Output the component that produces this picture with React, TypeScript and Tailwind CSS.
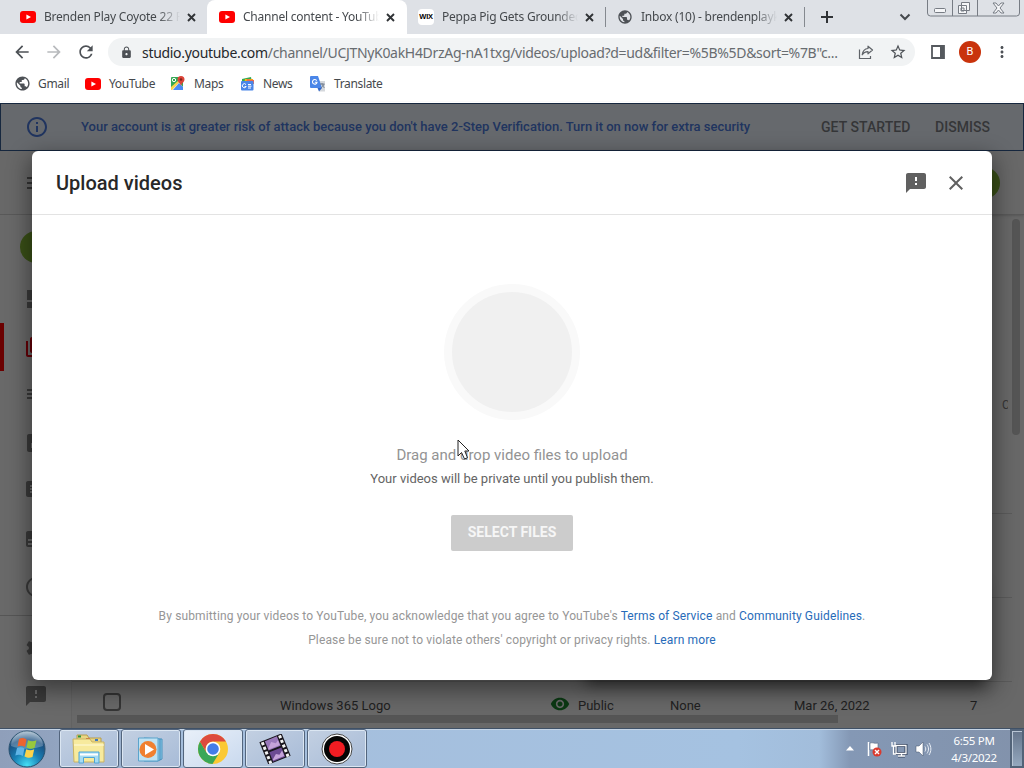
import type { ReactNode } from "react"
import {
  MdArrowBack, MdArrowForward, MdAnalytics, MdClose, MdCopyright, MdDashboard,
  MdFeedback, MdInfoOutline, MdLock, MdMenu, MdMoreVert, MdPlaylistPlay, MdPublic, MdRefresh,
  MdSettings, MdStarBorder, MdSubtitles, MdComment, MdVideoLibrary, MdVisibility,
} from "react-icons/md"

function YouTubeIcon() {
  return (
    <svg width="16" height="12" viewBox="0 0 16 12" className="shrink-0">
      <rect width="16" height="12" rx="3" fill="#f00" />
      <path d="M6.4 3.4v5.2L11 6z" fill="#fff" />
    </svg>
  )
}

function WixIcon() {
  return (
    <span className="flex h-4 w-4 shrink-0 items-center justify-center rounded-sm bg-white font-['Liberation_Sans'] text-[7.5px] font-bold tracking-[-0.3px] text-black">
      WIX
    </span>
  )
}

function MapsIcon() {
  return (
    <svg width="15" height="15" viewBox="0 0 15 15">
      <rect x="1" y="1" width="12" height="13" rx="1" fill="#34a853" />
      <path d="M1 14 9 6l4 5v3z" fill="#e8eaed" />
      <path d="M3 14 9 7l4 4v3z" fill="#4a8af4" />
      <path d="M1 11 9 4l1 1.5-8 8.5H1z" fill="#fbd34d" />
      <circle cx="4" cy="4" r="1.7" fill="none" stroke="#fff" strokeWidth="1" />
      <path d="M11 0a3.5 3.5 0 0 1 3.5 3.5C14.500 6 12 6.500 11 10 10 6.500 7.500 6 7.500 3.500A3.500 3.500 0 0 1 11 0z" fill="#dc4437" />
      <circle cx="11" cy="3.500" r="1.200" fill="#7b231c" />
    </svg>
  )
}

function NewsIcon() {
  return (
    <svg width="15" height="14" viewBox="0 0 15 14">
      <path d="M2 2 11 0l1 5H2z" fill="#34a853" />
      <path d="M5 2h8v5H4z" fill="#fbbc04" />
      <path d="m7 2 7 1v4H6z" fill="#ea6a4c" />
      <rect x="1" y="4" width="12.500" height="9.500" rx="1" fill="#4a86e8" />
      <path d="M6 7.600A2 2 0 1 0 6.200 9.500H4.600M8 7.500h3M8 9.200h3.500M8 11h3" fill="none" stroke="#fff" strokeWidth="1" />
    </svg>
  )
}

function TranslateIcon() {
  return (
    <svg width="16" height="16" viewBox="0 0 16 16">
      <path d="M7 5h8v10.500h-6z" fill="#d5d8dc" />
      <path d="M1 0h7l4 12H1a1 1 0 0 1-1-1V1a1 1 0 0 1 1-1z" fill="#4a86e8" />
      <path d="M7.500 12H12l-3 3.500z" fill="#3367c8" />
      <path d="M6.700 4.600A2.300 2.300 0 1 0 7 6.300H4.800" fill="none" stroke="#fff" strokeWidth="1.100" />
      <path d="M10 8h4.500M12 7v1c.5 2 1.500 3 2.500 4M14 8c-.5 2-1.500 3-3 4" fill="none" stroke="#6e7b8b" strokeWidth=".9" />
    </svg>
  )
}

function ShareIcon() {
  return (
    <svg width="16" height="16" viewBox="0 0 16 16" fill="none" stroke="#5f6368" strokeWidth="1.200">
      <path d="M1.500 5.500v9h11V12" />
      <path d="M10 2.200 14.500 6 10 9.800V7.600C7 7.500 5.500 8.600 4.200 10.800 4.600 7.500 6.500 4.800 10 4.500z" strokeLinejoin="round" />
    </svg>
  )
}

function ChromeIcon() {
  return (
    <svg width="32" height="32" viewBox="0 0 32 32">
      <circle cx="16" cy="16" r="15" fill="#fbc934" />
      <path d="M3 8.500A15 15 0 0 0 15.500 31L22.500 19.500 16 16 9.500 19.500z" fill="#3aa757" />
      <path d="M3 8.500A15 15 0 0 1 29 8.500H16a7.500 7.500 0 0 0-6.500 11z" fill="#dd4b3e" />
      <circle cx="16" cy="16" r="7.300" fill="#fff" />
      <circle cx="16" cy="16" r="5.800" fill="#447de8" />
    </svg>
  )
}

function StartOrb() {
  return (
    <svg width="38" height="38" viewBox="0 0 38 38">
      <defs>
        <radialGradient id="orb" cx=".5" cy=".95" r=".95">
          <stop offset="0" stopColor="#46dff5" />
          <stop offset=".4" stopColor="#1880b5" />
          <stop offset=".75" stopColor="#1b4f80" />
          <stop offset="1" stopColor="#a6bccd" />
        </radialGradient>
      </defs>
      <circle cx="19" cy="19" r="18" fill="url(#orb)" stroke="#28506e" />
      <path d="M3 16a16 15 0 0 1 32 0c-8 3-22 4-32 0z" fill="#fff" opacity=".25" />
      <path d="M11 9c3-1.500 5-1 7.500.5L17 17c-2.500-1.500-5-1.500-7.500-.5z" fill="#eb6430" />
      <path d="M20 10.200c3 1.300 5 1.500 8.500 0L26.500 18c-3 1.300-5 .8-8-.5z" fill="#98c83d" />
      <path d="M9 18c2.500-1 5-1 7.500.5L14.800 26c-2.500-1.500-4.800-1.500-7.500-.5z" fill="#5fb4e6" />
      <path d="M18.200 19.200c3 1.300 5 1.300 8 0L24.500 27c-3 1.300-5 .8-8-.5z" fill="#fbd34a" />
    </svg>
  )
}

function ExplorerIcon() {
  return (
    <svg width="34" height="32" viewBox="0 0 34 32">
      <path d="M5 2h10l2 3h12v22H5z" fill="#e9d684" stroke="#b79d4c" />
      <path d="M6 2.500h3v2H6z" fill="#29943b" />
      <path d="M14 5h4v2h-4z" fill="#d4552c" />
      <path d="M1 6h17l2 3h12v20H2z" fill="#f7ea9d" stroke="#c9b363" />
      <path d="M23 6h3v2h-3z" fill="#3c79c4" />
      <path d="M2 12h30" stroke="#fffbdc" />
      <path d="M7 19h20v11h-4.500v-5.500h-11V30H7z" fill="#a5dcf4" stroke="#50a5d6" />
      <path d="M8 21.500h18" stroke="#fff" strokeWidth="2" />
    </svg>
  )
}

function MediaIcon() {
  return (
    <svg width="28" height="28" viewBox="0 0 28 28">
      <path d="m7 3 18 1v20l-4 2H7z" fill="#8ac9e8" stroke="#4b94bf" />
      <path d="M1.500 3H21v23H1.500z" fill="#bfe2f3" stroke="#5ba4cc" />
      <path d="M23 4v21" stroke="#4088b8" />
      <circle cx="11" cy="14.500" r="8.500" fill="#f08030" />
      <path d="M8 9v11l9-5.500z" fill="#fff" />
    </svg>
  )
}

function FilmIcon() {
  return (
    <svg width="32" height="30" viewBox="0 0 32 30">
      <g transform="rotate(-22 16 15)">
        <rect x="4" y="3" width="24" height="24" fill="#18151c" />
        <rect x="9.500" y="4" width="13" height="10" fill="#9a79bb" />
        <rect x="9.500" y="16" width="13" height="10" fill="#6c4b93" />
        <path d="m10 12 5-5 4 3 3-2v5H10zM10 24l5-4 3 2 4-3v6H10z" fill="#c5a3d9" />
        <path d="M6.700 4v23M25.300 4v23" stroke="#f3f3f3" strokeWidth="3" strokeDasharray="3 2" />
      </g>
    </svg>
  )
}

function RecordIcon() {
  return (
    <svg width="32" height="32" viewBox="0 0 32 32">
      <circle cx="16" cy="16" r="15" fill="#fff" stroke="#444" />
      <circle cx="16" cy="16" r="13" fill="#050505" />
      <circle cx="16" cy="16" r="8" fill="#f01c22" />
    </svg>
  )
}

function Tray() {
  return (
    <div className="flex items-center">
      <svg width="8" height="5" viewBox="0 0 8 5" className="mr-3"><path d="M4 0 8 4.500H0z" fill="#fff" /></svg>
      <svg width="18" height="18" viewBox="0 0 18 18" className="mr-1.5">
        <path d="M2.500 2v14" stroke="#fff" strokeWidth="1.500" />
        <path d="M4 3c3-1 4 1 8 0v7c-4 1-5-1-8 0z" fill="#fff" stroke="#526480" strokeWidth=".6" />
        <circle cx="11" cy="12" r="4.500" fill="#da3a2e" />
        <path d="m9 10 4 4m0-4-4 4" stroke="#fff" strokeWidth="1.400" />
      </svg>
      <svg width="18" height="18" viewBox="0 0 18 18" className="mr-1.5" fill="none">
        <path d="M6 5.500h10v8H6zM8 16h7M11.500 14v2" stroke="#33425c" strokeWidth="3" />
        <path d="M6 5.500h10v8H6zM8 16h7M11.500 14v2M2 2v4h3V2M3.500 6v8H6" stroke="#fff" strokeWidth="1.300" />
      </svg>
      <svg width="18" height="18" viewBox="0 0 18 18" fill="none">
        <path d="M2 6h3l4-4v14l-4-4H2z" fill="#fff" stroke="#40506a" strokeWidth=".5" />
        <path d="M11 6.500c1 1.500 1 3.500 0 5M13 4.500c2 3 2 6 0 9M15 3c2.500 4 2.500 8 0 12" stroke="#e8eef6" strokeWidth="1" />
      </svg>
    </div>
  )
}

function Tab({ icon, title, width, active }: { icon: ReactNode, title: string, width: string, active?: boolean }) {
  return (
    <div className={`flex h-[34px] shrink-0 items-center ${active ? "rounded-t-lg bg-white" : ""} ${width}`}>
      {icon}
      <p className="ml-2 w-[136px] overflow-hidden whitespace-nowrap text-[12px] tracking-[-0.22px] text-[#45494d] [mask-image:linear-gradient(90deg,#000_84%,transparent)]">{title}</p>
      <svg width="9" height="9" viewBox="0 0 9 9" className="ml-[7px] shrink-0"><path d="m1 1 7 7m0-7L1 8" stroke="#303336" strokeWidth="1.900" /></svg>
    </div>
  )
}

function WindowButtons() {
  return (
    <svg width="94" height="17" viewBox="0 0 94 17" fill="none" stroke="#777c84" className="ml-[16px] shrink-0 self-start">
      <path d="M.5 0v13a3 3 0 0 0 3 3h86a3 3 0 0 0 3-3V0M25.500 0v16M50.500 0v16" />
      <rect x="7.500" y="8.500" width="11" height="4" rx="1" fill="#f5f6f8" />
      <path d="M34.500 2.500h8v8h-8zM31.500 5.500h8v8h-8z" fill="#f5f6f8" />
      <path d="M34 8h3v3h-3z" />
      <path d="m66 3 3 0 2.500 3L74 3h3l-4 5 4 5h-3l-2.500-3L69 13h-3l4-5z" fill="#f5f6f8" />
    </svg>
  )
}

const bookmarks = [
  { label: "Gmail", icon: <MdPublic size={17} className="text-[#4d5156]" />, style: "w-[71px] gap-[7px]" },
  { label: "YouTube", icon: <YouTubeIcon />, style: "w-[85px] gap-2" },
  { label: "Maps", icon: <MapsIcon />, style: "w-[70px] gap-[9px]" },
  { label: "News", icon: <NewsIcon />, style: "w-[70px] gap-2" },
  { label: "Translate", icon: <TranslateIcon />, style: "w-[90px] gap-2" },
]

function BrowserChrome() {
  return (
    <header className="shrink-0 bg-white font-['Noto_Sans','Open_Sans',sans-serif]">
      <div className="flex h-[34px] items-center bg-[#dee1e6]">
        <Tab width="w-[207px] rounded-br-lg pl-5" icon={<YouTubeIcon />} title="Brenden Play Coyote 22 F" />
        <Tab active width="w-[200px] pl-3" icon={<YouTubeIcon />} title="Channel content - YouTub" />
        <Tab width="w-[198px] pl-[11px]" icon={<WixIcon />} title="Peppa Pig Gets Grounded" />
        <div className="h-5 w-px bg-[#85898f]" />
        <Tab width="w-[198px] pl-[11px]" icon={<MdPublic size={16} className="shrink-0 text-[#4d5156]" />} title="Inbox (10) - brendenplayk" />
        <div className="h-5 w-px bg-[#85898f]" />
        <svg width="12" height="12" viewBox="0 0 12 12" className="ml-4"><path d="M6 0v12M0 6h12" stroke="#303336" strokeWidth="2" /></svg>
        <svg width="12" height="8" viewBox="0 0 12 8" className="ml-[66px]"><path d="m1.500 1.500 4.500 4.500 4.500-4.500" fill="none" stroke="#45494d" strokeWidth="2" /></svg>
        <WindowButtons />
      </div>

      <div className="flex h-9 items-center text-[#4d5156]">
        <MdArrowBack size={20} className="ml-3" />
        <MdArrowForward size={20} className="ml-3 text-[#b8babd]" />
        <MdRefresh size={20} className="ml-3" />
        <div className="ml-3 flex h-7 w-[807px] items-center rounded-full bg-[#f1f3f4]">
          <MdLock size={13} className="ml-3" />
          <p className="ml-[9px] w-[708px] whitespace-nowrap text-[14px] tracking-[-0.31px] text-[#686c70]">
            <span className="text-[#25282c]">studio.youtube.com</span>/channel/UCJTNyK0akH4DrzAg-nA1txg/videos/upload?d=ud&filter=%5B%5D&sort=%7B"c...
          </p>
          <span className="ml-[8px]"><ShareIcon /></span>
          <MdStarBorder size={18} className="ml-[15px]" />
        </div>
        <svg width="14" height="14" viewBox="0 0 14 14" className="ml-4"><path d="M1 1h12v12H1z" fill="none" stroke="#55595e" strokeWidth="1.800" /><path d="M9 1h4v12H9z" fill="#55595e" /></svg>
        <span className="ml-3.5 flex h-[22px] w-[22px] items-center justify-center rounded-full bg-[#c9330c] font-[Roboto] text-[11px] text-white">B</span>
        <MdMoreVert size={18} className="ml-3" />
      </div>

      <div className="flex h-8 items-center border-b border-[#fafafa] pb-1 pl-3.5">
        {bookmarks.map(item => (
          <div key={item.label} className={`flex shrink-0 items-center text-[12px] tracking-[-0.35px] text-[#45494d] ${item.style}`}>
            {item.icon}
            <p>{item.label}</p>
          </div>
        ))}
      </div>
    </header>
  )
}

const menu = [
  { icon: <MdDashboard size={24} />, style: "mt-[24px] h-12" },
  { icon: <MdVideoLibrary size={24} />, style: "h-12 border-l-4 border-[#6b0000] pl-[20px]! text-[#650007]" },
  { icon: <MdPlaylistPlay size={24} />, style: "h-12" },
  { icon: <MdAnalytics size={24} />, style: "h-12" },
  { icon: <MdComment size={24} />, style: "h-12" },
  { icon: <MdSubtitles size={24} />, style: "h-12" },
  { icon: <MdCopyright size={24} />, style: "h-12" },
]

function StudioPage() {
  return (
    <div className="flex h-full flex-col bg-[#686868] text-[#353535]">
      <div className="flex h-12 shrink-0 items-center border border-[#17283f] bg-[#66696d] text-[#20345f]">
        <MdInfoOutline size={24} className="ml-6" />
        <p className="ml-8 w-[740px] whitespace-nowrap text-[13px] font-medium">Your account is at greater risk of attack because you don't have 2-Step Verification. Turn it on now for extra security</p>
        <p className="w-[114px] text-[14px] font-medium tracking-[0.05px] text-[#353638]">GET STARTED</p>
        <p className="text-[14px] font-medium tracking-[0.05px] text-[#353638]">DISMISS</p>
      </div>

      <div className="flex h-16 shrink-0 items-center justify-between border-b border-[#595959] pr-6 pl-6 shadow-sm">
        <MdMenu size={24} />
        <span className="h-8 w-8 rounded-full bg-[#3a5017]" />
      </div>

      <div className="flex min-h-0 flex-1">
        <aside className="w-[72px] shrink-0 border-r border-[#626262] bg-[#696969] text-[#3a3a3a]">
          <span className="mt-4 ml-5 block h-8 w-8 rounded-full bg-[#3a5017]" />
          <div className="-mt-3">
            {menu.map((item, i) => (
              <div key={i} className={`flex items-center pl-[24px] ${item.style}`}>{item.icon}</div>
            ))}
          </div>
          <div className="mt-1 border-t border-[#565656] pt-2 pl-6">
            <div className="flex h-12 items-center"><MdSettings size={24} /></div>
            <div className="flex h-12 items-center"><MdFeedback size={24} /></div>
          </div>
        </aside>

        <main className="flex min-w-0 flex-1 flex-col text-[13px]">
          <div className="flex h-[214px] justify-end">
            <p className="mt-[181px] mr-1 w-[6px] overflow-hidden text-[12px]">C</p>
            <div className="mt-1 mr-1 h-[216px] w-2 rounded-full bg-[#555]" />
          </div>
          <div className="mr-3 h-[85px] border-b border-[#5b5b5b]" />
          <div className="mr-3 h-[84px] border-b border-[#5b5b5b]" />
          <div className="mr-3 h-[84px] border-b border-[#5b5b5b]" />
          <div className="flex h-8 shrink-0 items-start pt-[10px] pl-[31px] text-[#202020]">
            <span className="mt-px h-[18px] w-[18px] rounded-sm border-2 border-[#353535]" />
            <p className="mt-1 ml-[159px] w-[270px]">Windows 365 Logo</p>
            <MdVisibility size={20} className="mt-[2px] text-[#0b3913]" />
            <p className="mt-1 ml-2 w-[92px]">Public</p>
            <p className="mt-1 w-[124px]">None</p>
            <p className="mt-1 w-[176px]">Mar 26, 2022</p>
            <p className="mt-1">7</p>
          </div>
          <div className="mt-[1px] ml-[5px] h-2 w-[761px] shrink-0 bg-[#555]" />
        </main>
      </div>
    </div>
  )
}

function UploadDialog() {
  return (
    <section className="absolute top-12 left-8 flex h-[529px] w-[960px] flex-col rounded-[6px] bg-white shadow-[0_8px_22px_3px_rgba(0,0,0,0.42)]">
      <div className="flex h-16 items-center border-b border-[#e3e3e3] px-6">
        <h1 className="flex-1 text-[20px] font-medium text-[#282828]">Upload videos</h1>
        <MdFeedback size={24} className="text-[#606060]" />
        <MdClose size={24} className="ml-4 text-[#606060]" />
      </div>
      <div className="flex flex-1 flex-col items-center">
        <div className="mt-[69px] flex h-[136px] w-[136px] items-center justify-center rounded-full bg-[#f9f9f9]">
          <span className="h-[120px] w-[120px] rounded-full bg-[#f0f0f0]" />
        </div>
        <p className="mt-[23px] text-[15px] leading-6 text-[#939393]">Drag and drop video files to upload</p>
        <p className="text-[13px] leading-6 text-[#646464]">Your videos will be private until you publish them.</p>
        <button className="mt-6 h-9 w-[122px] rounded-xs bg-[#ccc] pb-0.5 text-[14px] font-bold text-[#f6f6f6]">SELECT FILES</button>
        <div className="mt-[53px] text-center text-[12px] leading-6 tracking-[0.135px] text-[#969696]">
          <p>By submitting your videos to YouTube, you acknowledge that you agree to YouTube's <a className="text-[#286bb9]">Terms of Service</a> and <a className="text-[#286bb9]">Community Guidelines</a>.</p>
          <p>Please be sure not to violate others' copyright or privacy rights. <a className="text-[#286bb9]">Learn more</a></p>
        </div>
      </div>
      <svg width="13" height="21" viewBox="0 0 13 21" className="absolute top-[288px] left-[425px]">
        <path d="M1 1v16l3.500-3.500L7.500 20l3-1.300L7.800 12H12z" fill="#fff" stroke="#222" strokeLinejoin="round" />
      </svg>
    </section>
  )
}

const apps = [
  { name: "Explorer", icon: <ExplorerIcon /> },
  { name: "Media", icon: <MediaIcon /> },
  { name: "Chrome", icon: <ChromeIcon />, open: true },
  { name: "Film", icon: <FilmIcon /> },
  { name: "Record", icon: <RecordIcon /> },
]

function Taskbar() {
  return (
    <footer className="flex h-10 shrink-0 items-center border-t border-[#405166] bg-[linear-gradient(90deg,#8f9fba_0,#91a3bf_5%,#a5bedc_18%,#a5c2e1_72%,#a2bddb_80%,#8498b5_83%,#8292ab_100%)] shadow-[inset_0_1px_#c4d4e6]">
      <div className="ml-2 mr-[13px]"><StartOrb /></div>
      <div className="flex gap-0.5">
        {apps.map(app => (
          <div key={app.name} className={`flex h-[39px] w-[60px] items-center justify-center rounded-[3px] border border-[#53657d] shadow-[inset_0_0_0_1px_#dbe6f2] ${app.open ? "bg-linear-to-br from-[#e9f0f9] to-[#c9d9ee]" : "bg-linear-to-br from-[#c3d0e2] to-[#a7bbd7]"}`}>{app.icon}</div>
        ))}
      </div>
      <div className="ml-auto flex h-full items-center">
        <Tray />
        <div className="ml-[14px] mr-2 w-[56px] text-center font-['Noto_Sans','Open_Sans',sans-serif] text-[11.5px] leading-[17px] tracking-[-0.3px] text-white">
          <p>6:55 PM</p>
          <p>4/3/2022</p>
        </div>
        <div className="h-full w-[14px] border-2 border-[#526378] bg-linear-to-b from-[#65758b] to-[#95a8be] shadow-[inset_1px_1px_#b8c5d4]" />
      </div>
    </footer>
  )
}

export default function App() {
  return (
    <div className="flex h-[768px] w-[1024px] flex-col overflow-hidden font-[Roboto,sans-serif]">
      <BrowserChrome />
      <div className="relative mt-px h-[625px] shrink-0 overflow-hidden">
        <StudioPage />
        {/* menu popup hidden behind the dialog, only its shadow shows */}
        <div className="absolute top-[480px] left-[590px] h-[92px] w-[390px] shadow-[0_6px_14px_4px_rgba(0,0,0,0.45)]" />
        <UploadDialog />
      </div>
      <Taskbar />
    </div>
  )
}
